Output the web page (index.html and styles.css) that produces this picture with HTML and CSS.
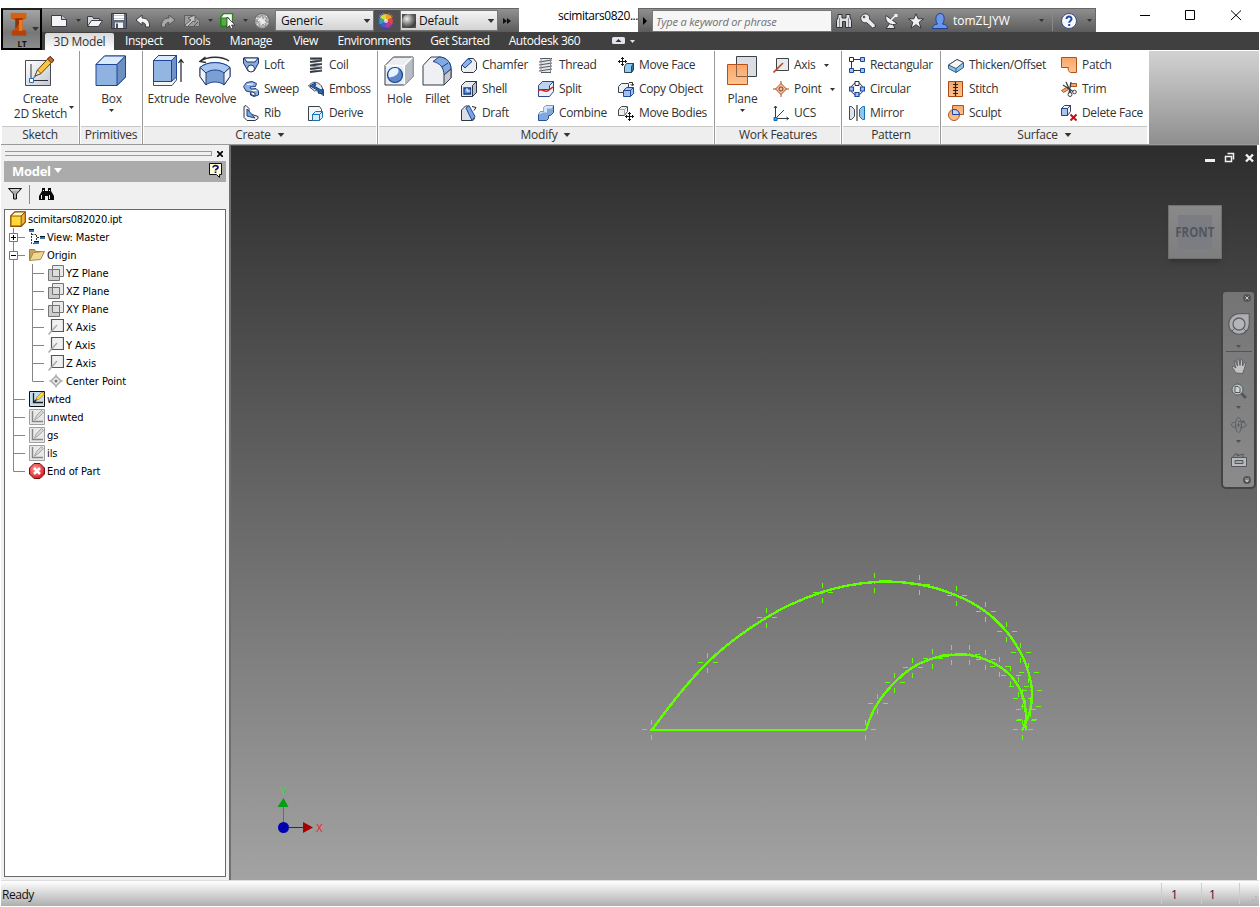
FILE: index.html
```html
<!DOCTYPE html>
<html lang="en">
<head>
<meta charset="utf-8">
<title>scimitars082020.ipt</title>
<link rel="stylesheet" href="styles.css">
</head>
<body>
<svg class="sprite" width="0" height="0" aria-hidden="true">
  <defs>
    <linearGradient id="steel" x1="0" y1="0" x2="1" y2="1"><stop offset="0" stop-color="#ffffff"/><stop offset="1" stop-color="#c3c8d0"/></linearGradient>
    <linearGradient id="orange" x1="0" y1="0" x2="0" y2="1"><stop offset="0" stop-color="#f9a668"/><stop offset="1" stop-color="#fdc491"/></linearGradient>
    <radialGradient id="ball" cx=".35" cy=".35" r=".7"><stop offset="0" stop-color="#f0f0f0"/><stop offset=".5" stop-color="#8a8a86"/><stop offset="1" stop-color="#33322f"/></radialGradient>
    <radialGradient id="redball" cx=".4" cy=".35" r=".7"><stop offset="0" stop-color="#ff9a9a"/><stop offset="1" stop-color="#d81418"/></radialGradient>
  </defs>
  <symbol id="caret" viewBox="0 0 5 3"><path d="M0 0h5L2.500 3z" fill="currentColor"/></symbol>
  <symbol id="new" viewBox="0 0 16 16"><path d="M.5 2.500h10l5 4v7H.5z" fill="#f4f4f6" stroke="#3a3d46"/><path d="M10.500 2.500v4h5" fill="#c5c8d0" stroke="#3a3d46"/></symbol>
  <symbol id="open" viewBox="0 0 16 16"><path d="M.5 13.500v-10h5l1 2h6v3" fill="#d5d8dd" stroke="#3a3d46"/><path d="M.5 13.500l4-6h11l-4 6z" fill="#f3f3f5" stroke="#3a3d46"/></symbol>
  <symbol id="save" viewBox="0 0 16 16"><path d="M.5.500h15v15h-15z" fill="#626977" stroke="#343943"/><path d="M3 1h10v6H3z" fill="#fff"/><path d="M3 2.500h10M3 5.500h10" stroke="#c0c7d1"/><path d="M4 9.500h8V15H4z" fill="#f0f1f3"/><path d="M5 10.500h2V15H5z" fill="#4a5160"/></symbol>
  <symbol id="undo" viewBox="0 0 16 16"><path d="M1 7l6-5v3c5 0 8 3 7.500 9h-4c.5-3-1-4.500-3.500-4.500V12z" fill="#f4f4f4" stroke="#3d404a"/></symbol>
  <symbol id="redo" viewBox="0 0 16 16"><path d="M15 7L9 2v3c-5 0-8 3-7.500 9h4c-.5-3 1-4.500 3.500-4.500V12z" fill="#a9a9a9" stroke="#565656"/></symbol>
  <symbol id="update" viewBox="0 0 16 16"><path d="M.5 2.500h9l6 5v6H.5z" fill="#9b9b9b" stroke="#606060"/><path d="M1 12l6-5-3-2 7-3v7L9 8l-6 6z" fill="#c2c2c2" stroke="#5f5f5f"/><path d="M9 14l5-5" stroke="#555"/></symbol>
  <symbol id="select" viewBox="0 0 16 16"><path d="M.5 4.500l3-4h9v9l-3 4h-9z" fill="#f3fff0" stroke="#2d8120" stroke-width="1.300"/><path d="M1 5h8v8H1z" fill="#57ad45" stroke="#277a1a"/><path d="M7 4v11l2.500-2.500L11 16l2-1-1.500-3H15z" fill="#fff" stroke="#333" stroke-width=".8"/></symbol>
  <symbol id="sphere" viewBox="0 0 16 16"><circle cx="8" cy="8" r="7.500" fill="#b3b3b3" stroke="#6a6a6a"/><path d="M4 3l2 2 2-3 1 4 4-2-2 4 4 1-4 1 1 4-3-3-3 4V9L1 8l3-1z" fill="#e9e9e9" stroke="#777" stroke-width=".6"/><path d="M2 5l12 6M3 12L13 3" stroke="#eee" stroke-dasharray="2 1"/></symbol>
  <symbol id="wheel" viewBox="0 0 16 16"><path d="M8 8V0a8 8 0 0 1 7 4z" fill="#f0a02c"/><path d="M8 8l7-4a8 8 0 0 1 0 8z" fill="#e24a33"/><path d="M8 8l7 4a8 8 0 0 1-7 4z" fill="#b53b9b"/><path d="M8 8v8a8 8 0 0 1-7-4z" fill="#4757d2"/><path d="M8 8l-7 4a8 8 0 0 1 0-8z" fill="#35a4a0"/><path d="M8 8L1 4a8 8 0 0 1 7-4z" fill="#d8dd34"/><circle cx="8" cy="8" r="2" fill="#fff" opacity=".7"/><circle cx="8" cy="8" r="7.500" fill="none" stroke="#37428a"/></symbol>
  <symbol id="material" viewBox="0 0 14 14"><path d="M0 0h14v14H0z" fill="#55524e"/><circle cx="7" cy="7" r="7" fill="url(#ball)"/></symbol>
  <symbol id="binoc" viewBox="0 0 16 16"><path d="M2 1.500h4V5h4V1.500h4v3l1.500 3v7H9.500v-6h-3v6H.5v-7l1.500-3z" fill="#dedfe3" stroke="#2f3237"/><path d="M3.500 5v9M12.500 5v9" stroke="#858a92"/></symbol>
  <symbol id="key" viewBox="0 0 16 16"><path d="M6.500 9.500l6 5.500 3-1-.5-2.500L9.500 6C10 2 7 .500 4.500 1S0 4 1 6.500s3 4 5.500 3z" fill="#ececee" stroke="#33363c"/><circle cx="4" cy="4" r="1.300" fill="#555"/></symbol>
  <symbol id="dish" viewBox="0 0 16 16"><path d="M6 10l-4 5.500h9L9 11" fill="#e6e6e8" stroke="#35383e"/><path d="M2 2.500c-2 6 5 11.500 11 8z" fill="#f2f2f3" stroke="#35383e"/><path d="M7 7l5-5" stroke="#f5f5f5" fill="none" stroke-width="1.500"/><path d="M10.500 1h3v3h-3z" fill="#f2f2f3"/></symbol>
  <symbol id="star" viewBox="0 0 16 16"><path d="M8 .800l2.200 5h5.300l-4.300 3.400 1.800 6L8 11.700 3 15.200l1.800-6L.5 5.800h5.300z" fill="#f0f0f2" stroke="#34373c"/></symbol>
  <symbol id="user" viewBox="0 0 16 16"><path d="M.5 15.500c0-3 2-4 5-4.500C3 8 3 1 8 .500S13 8 10.500 11c3 .500 5 1.500 5 4.500z" fill="#6a97ec" stroke="#1d3f99"/></symbol>
  <symbol id="help" viewBox="0 0 16 16"><circle cx="8" cy="8" r="7.500" fill="#f7f8fb" stroke="#35507c"/><path d="M5.500 6c0-3.500 5.300-3 5 0 0 1.700-2.300 1.800-2.300 3.800M8.200 11v2" fill="none" stroke="#1f4aa5" stroke-width="2"/></symbol>
  <symbol id="applogo" viewBox="0 0 20 30"><path d="M1 1h17v6l-4 2v10l4 2v5H2v-5l4-2V9L1 7z" fill="#c24a0a"/><path d="M1 1h17v6H1z" fill="#d8600f"/><path d="M6 7h8L6 19z" fill="#8f3407"/><path d="M10 9h4v11l-4 6z" fill="#e57a2b"/><path d="M2 21h16v5H2z" fill="#b44309"/></symbol>

  <symbol id="sketch" viewBox="1 0 32 32"><path d="M2.500 5.500h25v25h-25z" fill="url(#steel)" stroke="#474b55"/><path d="M8 9v16.500h17M8.500 25l10-10" stroke="#30333a" fill="none"/><path d="M6.500 23.500h4v4h-4z" fill="#fff" stroke="#1c6fc0"/><path d="M12 21l2.500-6L27 1.500l4 3.500L18 18.500z" fill="#ffc63a" stroke="#58400f"/><path d="M24.500 4L27 1.500l4 3.500-2.500 3z" fill="#c76b37" stroke="#5d2b12"/><path d="M12 21l2.500-6 3.500 3.500z" fill="#f7e3bf" stroke="#493a23" stroke-width=".7"/></symbol>
  <symbol id="box" viewBox="0 0 32 32"><path d="M1 9.500L9.500 1h21v21L22 30.500H1z" fill="#8fb2e0" stroke="#1e4593"/><path d="M1 9.500L9.500 1h21L22 9.500z" fill="#dbeafa" stroke="#1e4593"/><path d="M22 9.500L30.500 1v21L22 30.500z" fill="#6d8fc2" stroke="#1e4593"/></symbol>
  <symbol id="extrude" viewBox="0 0 32 32"><path d="M1.500 25V5.500l5-5h18V25l-4.500 5.500H1.500z" fill="#f4f5f6" stroke="#475161"/><path d="M1.500 5.500l5-5h18l-5 5v21h-18z" fill="#92b5e2" stroke="#1d469b"/><path d="M1.500 5.500l5-5h18l-5 5z" fill="#dceafa" stroke="#1d469b"/><path d="M19.500 5.500l5-5V22l-5 4.500z" fill="#7192c5" stroke="#1d469b"/><path d="M29 27V5M26.500 8L29 4.500 31.500 8" fill="none" stroke="#202329" stroke-width="1.200"/></symbol>
  <symbol id="revolve" viewBox="0 0 32 32"><path d="M1 12.500C8 6 24 6 31 12.500v9L25 30c-4-4-14-4-18 0l-6-8.500z" fill="#7a9fd2" stroke="#1c4497"/><path d="M1 12.500C8 6 24 6 31 12.500L25 18c-4-4-14-4-18 0z" fill="#a9c7ee" stroke="#1c4497"/><path d="M1 12.500L7 18v12l-6-8.500zM31 12.500L25 18v12l6-8.500z" fill="#f1f4f8" stroke="#263d6a"/><path d="M1 6.500C9 1 23 1 30 6M6.500 2L1 6.500l6 1" fill="none" stroke="#2a2d33" stroke-width="1.500"/></symbol>
  <symbol id="hole" viewBox="-1 -1 32 32"><path d="M1 9.500L9.500 1H29v19.500L20.500 29H1z" fill="#ebedf0" stroke="#343b49"/><path d="M1.500 9.500h19V28.500M20.500 9.500L28.500 1.500" fill="none" stroke="#fff" stroke-width="1.500"/><path d="M21 9.700L28.500 2v18.500L21 28z" fill="#b9bec6"/><circle cx="11" cy="19" r="7.500" fill="#5c87c9" stroke="#16418f" stroke-width="1.200"/><path d="M4.500 17a7 7 0 0 1 9.500-4.500c2 5-2 8-9 9a7 7 0 0 1-.5-4.500z" fill="#e9f3fd"/></symbol>
  <symbol id="fillet" viewBox="-1 -1 32 32"><path d="M1 9.500L9 1h8c7 0 12 5 12 12v9l-7 7H1z" fill="#eff0f3" stroke="#343b49"/><path d="M11 5.500L17 1c7 0 12 5 12 12l-7 6C22 12 18 7 11 5.500z" fill="#82aae1" stroke="#184291"/><path d="M22 19l7-6v9l-7 7z" fill="#c5c9d0" stroke="#343b49"/><path d="M20 11l6-4" stroke="#184291"/></symbol>
  <symbol id="plane" viewBox="0 0 32 32"><path d="M10.500 1.500h20v20h-20z" fill="#dadde2" stroke="#3a3f48"/><path d="M1.500 9.500h20v20h-20z" fill="url(#orange)" stroke="#bb4f14"/><path d="M10.500 9.500v12h11" fill="none" stroke="#8a6048"/></symbol>

  <symbol id="loft" viewBox="0 0 16 16"><path d="M.5 1v5L5 14h6l4.500-8V1z" fill="#85abdf" stroke="#213864"/><path d="M1 1h14l-3 4H4z" fill="#eef5fc" stroke="#213864"/><circle cx="8" cy="11.500" r="3.500" fill="#fff" stroke="#213864"/></symbol>
  <symbol id="sweep" viewBox="0 0 16 16"><path d="M.5 5.500l3-4L9 .500l4.500 2-1 3L7 6l1 2 5-.5 2.500 2.500v4L11 15.500 7.500 14v-3L3 10z" fill="#8db0e0" stroke="#1c4084"/><path d="M8 10.500l4 1.500v3l-4-1.500z" fill="#fff" stroke="#263c68"/><path d="M4 3.500l6-.5M8.500 9.500l5 0" stroke="#fff"/></symbol>
  <symbol id="rib" viewBox="0 0 16 16"><path d="M1 1.500l2-1 3 3v5l9 3v2l-3 2H4l-3-3z" fill="#f3f5f8" stroke="#2e3543"/><path d="M4 4v7l8 2z" fill="#7fa8e0" stroke="#1d4390"/></symbol>
  <symbol id="coil" viewBox="0 0 16 16"><path d="M2 1.500h12M2 5l12-1.500M2 8.500L14 7M2 12l12-1.500M2 15l12-1.500" fill="none" stroke="#33373f" stroke-width="1.800"/><path d="M2 2l12 1.500M2 5.500L14 7M2 9l12 1.500M2 12.500L14 14" stroke="#6b7078" stroke-width=".8"/></symbol>
  <symbol id="emboss" viewBox="0 0 16 16"><path d="M.5 5c4-5 9-5 13 0l2 5v5c-4-5-8-6-9-5z" fill="#e4e9f0" stroke="#3d485a"/><path d="M2 5l5-3 1 2-2 1 7 4 2-1v5l-5-1 1-2-7-4z" fill="#2b68b2" stroke="#153d7c"/></symbol>
  <symbol id="derive" viewBox="0 0 16 16"><path d="M.5 1.500h11l2 3v3h-7v8h-6z" fill="#f4f5f7" stroke="#3b4049"/><path d="M4.500 9.500l3-3h7v6l-3 3h-7z" fill="#d7edfb" stroke="#1772ae"/><path d="M4.500 9.500h7v6M11.500 9.500l3-3" fill="none" stroke="#1772ae"/></symbol>
  <symbol id="chamfer" viewBox="0 0 16 16"><path d="M.5 8.500l7-7h5l3 4v7l-3 3h-10l-2-2z" fill="#eceef1" stroke="#2e3543"/><path d="M1 8l6-6.500 4 3L4 11z" fill="#8db2e4" stroke="#194390"/></symbol>
  <symbol id="shell" viewBox="0 0 16 16"><path d="M.5 4.500l4-4h11v11l-4 4H.5z" fill="#e7eaef" stroke="#2e3543"/><path d="M11.500 4.500l4-4v11l-4 4z" fill="#b9c0ca" stroke="#2e3543"/><path d="M3 7h6.500v6H3z" fill="#6d98d8" stroke="#123c8c" stroke-width="1.300"/><path d="M6 7v3h3.500" stroke="#fff" fill="none"/></symbol>
  <symbol id="draft" viewBox="0 0 16 16"><path d="M.5 5l4-4h3l6 13-2 1.500H.5z" fill="#dce0e6" stroke="#2e3543"/><path d="M5 3l3-2.500 6 11-3 4z" fill="#7ca6e2" stroke="#1c4797"/><path d="M11 1.500l4 1-2 3" fill="none" stroke="#222"/></symbol>
  <symbol id="thread" viewBox="0 0 16 16"><path d="M3 1h10v14H3z" fill="#e5e7e9"/><path d="M2 1.500h12M1 5l13-2M1 8l13-2M1 11l13-2M1 14l13-2M3 15.500h10" stroke="#555960" stroke-width="1.100"/><path d="M3 1v14M12.500 1v14" stroke="#898d94"/></symbol>
  <symbol id="split" viewBox="0 0 16 16"><path d="M.5 4.500l4-4h11v10l-4 5H.5z" fill="#edf0f4" stroke="#2c4c88"/><path d="M.5 4.500l4-4h11l-4 4v4H.5z" fill="#bcd3f2" stroke="#2c4c88"/><path d="M0 10c4-4 7 3 11-1l4-3" fill="none" stroke="#d11c1c" stroke-width="1.500"/></symbol>
  <symbol id="combine" viewBox="0 0 16 16"><path d="M.5 9.500l2-3H6v-4l2-2h7.500v7l-3 3h-2v3l-2 2h-8z" fill="#82a7dc" stroke="#22509f"/><path d="M.5 9.500l2-3H6v-4l2-2h7.500l-2 3H9v4H5z" fill="#d5e4f7"/></symbol>
  <symbol id="moveface" viewBox="0 0 16 16"><path d="M4.500 0v9M0 4.500h9M3 1.500h3M3 7.500h3M1.500 3v3M7.500 3v3" stroke="#16181d" fill="none"/><path d="M6.500 9.500l2-3h7v6l-2 3h-7z" fill="#8ecdf0" stroke="#33404f"/><path d="M13.500 9.500l2-3v6l-2 3z" fill="#2a7bb9" stroke="#33404f"/></symbol>
  <symbol id="copyobj" viewBox="0 0 16 16"><path d="M.5 5.500l3-3h7v6l-2 3h-8z" fill="#edf0f4" stroke="#3c4452"/><path d="M5.500 9.500l3-3h7v6l-3 3h-7z" fill="#a1c1ec" stroke="#1d489c"/><path d="M5.500 9.500h7v6M12.500 9.500l3-3" fill="none" stroke="#1d489c"/><path d="M11 1.500h3.500V4M12.500 3l2 2 1.500-2" fill="none" stroke="#333"/></symbol>
  <symbol id="movebody" viewBox="0 0 16 16"><path d="M.5 4.500l3-3h6v5l-3 4h-6z" fill="#eceff2" stroke="#434952"/><path d="M6.500 4.500h-6M6.500 4.500v6M6.500 4.500l3-3" stroke="#a1a6ad"/><path d="M11.500 7v9M7 11.500h9M10 8.500h3M10 14.500h3M8.500 10v3M14.500 10v3" stroke="#101216"/></symbol>
  <symbol id="axis" viewBox="0 0 16 16"><path d="M3.500 1.500h12v12h-12z" fill="#e7eaed" stroke="#3e434c"/><path d="M.5 15.500L10 6" stroke="#b44e1d" stroke-width="1.600"/></symbol>
  <symbol id="point" viewBox="0 0 16 16"><path d="M8 0v16M0 8h16" stroke="#a55428"/><path d="M8 2.500L13.500 8 8 13.500 2.500 8z" fill="#f9c09a" stroke="#b04d1b"/><circle cx="8" cy="8" r="2" fill="#fff" stroke="#7a2f0c"/><path d="M7.500 7.500h1v1h-1z" fill="#522"/></symbol>
  <symbol id="ucs" viewBox="0 0 16 16"><path d="M2.500 1v12.500H16M3 13l8-8M1 3l1.500-2L4 3M13.500 12l2 1.500-2 1.500" fill="none" stroke="#373b43"/><path d="M1 12.500h3v3H1z" fill="#35a6ef" stroke="#0e64ad"/></symbol>
  <symbol id="rect" viewBox="0 0 16 16"><path d="M4 2.500h8M4 13.500h8M2.500 4v8" stroke="#30353d"/><path d="M.5.500h4v4h-4z" fill="#fff" stroke="#222b3a"/><path d="M11.500.500h4v4h-4zM.5 11.500h4v4h-4zM11.500 11.500h4v4h-4z" fill="#a5c3ef" stroke="#1b479c"/></symbol>
  <symbol id="circ" viewBox="0 0 16 16"><circle cx="8" cy="8" r="6" fill="none" stroke="#30353d"/><path d="M6 .500h4v4H6z" fill="#fff" stroke="#222b3a"/><path d="M.5 6h4v4h-4zM11.500 6h4v4h-4zM6 11.500h4v4H6z" fill="#a5c3ef" stroke="#1b479c" stroke-width="1.200"/></symbol>
  <symbol id="mirror" viewBox="0 0 16 16"><path d="M.5 1.500h2l3 3v7l-3 3h-2z" fill="#dfe2e6" stroke="#464b54"/><path d="M15.500 1.500h-2l-3 3v7l3 3h2z" fill="#8ac6ee" stroke="#1574ae"/><path d="M8 0v16" stroke="#111"/></symbol>
  <symbol id="thicken" viewBox="0 0 16 16"><path d="M.5 8L9 2.500l6.500 3v5L8 15.500l-7.500-4z" fill="#89c3e9" stroke="#215e91"/><path d="M.5 8L9 2.500l6.500 3L8 11.500z" fill="#f4f6f7" stroke="#49515c"/><path d="M8 11.500v4" stroke="#215e91"/></symbol>
  <symbol id="stitch" viewBox="0 0 16 16"><path d="M.5.500h14v15H.5z" fill="url(#orange)" stroke="#a94915"/><path d="M7.500 1v14M5 3.500h5M5 6.500h5M5 9.500h5M5 12.500h5" stroke="#2e2119" stroke-width="1.200"/></symbol>
  <symbol id="sculpt" viewBox="0 0 16 16"><path d="M4.500.500h11v9h-11z" fill="url(#orange)" stroke="#b0561f"/><circle cx="6" cy="10" r="5.500" fill="url(#orange)" stroke="#b0561f"/><path d="M4.500 4.600A5.500 5.500 0 0 1 11.500 9.500h-7z" fill="#bcd5f4" stroke="#1d479c"/></symbol>
  <symbol id="patch" viewBox="0 0 16 16"><path d="M.5.500h15v15h-6c-2-1-3-3-2-5h-7z" fill="url(#orange)" stroke="#b0521c"/></symbol>
  <symbol id="trim" viewBox="0 0 16 16"><path d="M9.500 2.500h6v3h-6zM.5 9.500l5-3 2 2-5 3z" fill="#f8a46d" stroke="#b1541e"/><path d="M5 1l5 11M10 1L8 12M2 4l11 7" stroke="#3b3f46" stroke-width="1.300"/><circle cx="9" cy="13.500" r="2" fill="#fff" stroke="#3b3f46"/><circle cx="13.500" cy="11" r="1.800" fill="#fff" stroke="#3b3f46"/></symbol>
  <symbol id="delface" viewBox="0 0 16 16"><path d="M.5 3.500l3-3h6v6l-3 4h-6z" fill="#f3f5f7" stroke="#35445c"/><path d="M.5 3.500h6v7h-6z" fill="#a9c5ec" stroke="#1d468f"/><path d="M6.500 3.500l3-3" stroke="#35445c"/><path d="M9.500 9.500l6 6M15.500 9.500l-6 6" stroke="#c21016" stroke-width="2"/></symbol>

  <symbol id="part" viewBox="0 0 16 16"><path d="M.8 5l4-4h10.400v10l-4 4.200H.8z" fill="#ffd939" stroke="#925109" stroke-width="1.400"/><path d="M.8 5l4-4h10.400l-4 4z" fill="#fffac5" stroke="#925109"/><path d="M11.200 5l4-4v10l-4 4.200z" fill="#e9b53d" stroke="#925109"/></symbol>
  <symbol id="views" viewBox="0 0 16 16"><path d="M0 0h5v3H0zM5 12h5v3H5zM11 7h5v3h-5z" fill="#3475b5"/><path d="M0 .500h5M5 12.500h5M11 7.500h5" stroke="#111"/><path d="M2.500 4v10.500H5M2.500 5.500H7M7.500 6v5M8 8.500h3" fill="none" stroke="#333" stroke-dasharray="2 1"/></symbol>
  <symbol id="folder" viewBox="0 0 16 16"><path d="M.5 13.500v-11h5l1 2h6v3" fill="#c8a55b" stroke="#a27f39"/><path d="M.5 13.500l4-8 11-1-4 8z" fill="#f1d795" stroke="#a98946"/></symbol>
  <symbol id="tplane" viewBox="0 0 16 16"><path d="M4.500.500h11v11h-11z" fill="#e9e9e9" stroke="#747474"/><path d="M.5 4.500h11v11H.5z" fill="#cbcccb" stroke="#747474"/><path d="M4.500 4.500h7v7h-7z" fill="#dcdddc" stroke="#747474"/></symbol>
  <symbol id="taxis" viewBox="0 0 16 16"><path d="M3.500.500h12v12h-12z" fill="#f0f0f0" stroke="#555" stroke-width="1.200"/><path d="M.5 15.500L9 6" stroke="#aaa" stroke-width="1.500"/></symbol>
  <symbol id="tpoint" viewBox="0 0 16 16"><path d="M8 1v14M1 8h14" stroke="#aaa"/><path d="M8 3l5 5-5 5-5-5z" fill="#eee" stroke="#aaa" stroke-width="1.500"/><circle cx="8" cy="8" r="1.500" fill="#777"/></symbol>
  <symbol id="sk" viewBox="0 0 16 16"><path d="M.5.500h15v15H.5z" fill="#e8e8e8" stroke="#a0a0a0"/><path d="M3.500 2v10.500H14" fill="none" stroke="#858585" stroke-width="1.400"/><path d="M5.500 11l2-4.500 5-5 2 2-5 5z" fill="#d4d4d4" stroke="#999" stroke-width=".8"/></symbol>
  <symbol id="skactive" viewBox="0 0 16 16"><path d="M.5.500h15v15H.5z" fill="#c6ddf0" stroke="#101010"/><path d="M4.500 2v9.500H14M5 11l5-5" fill="none" stroke="#222" stroke-width="1.300"/><path d="M7 9l1-3 5-5 2.500 2-5 5z" fill="#ffd83c" stroke="#9b7410" stroke-width=".7"/></symbol>
  <symbol id="eop" viewBox="0 0 16 16"><path d="M5 .500h6L15.500 5v6L11 15.500H5L.5 11V5z" fill="url(#redball)" stroke="#701014"/><path d="M5 5l6 6M11 5l-6 6" stroke="#fff" stroke-width="2.500"/></symbol>
  <symbol id="filter" viewBox="0 0 14 12"><path d="M.5.500h13L8.500 6v5h-3V6z" fill="#aaa" stroke="#111"/><path d="M3 2h8" stroke="#eee"/></symbol>
  <symbol id="find" viewBox="0 0 15 13"><path d="M3 0h3v3h3V0h3v3l3 5v4H9V8H6v4H0V8l3-5z" fill="#080808"/><path d="M2.500 7v4M10.500 7v4M4.500 2v1M10.500 2v1" stroke="#eee"/></symbol>
  <symbol id="helpnote" viewBox="0 0 13 15"><path d="M.5.500h12v11h-2v3l-3-3h-7z" fill="#ffffd8" stroke="#111"/><path d="M4 4.500c0-2.500 5-2.500 5 0 0 1.500-2.500 1.500-2.500 3M6.500 8.500v1.500" fill="none" stroke="#10107a" stroke-width="1.700"/></symbol>
  <symbol id="cross" viewBox="-10 -10 20 20" overflow="visible"><path d="M-10 0h5M-1.500 0h3M5 0h5M0-10v5M0-1.500v3M0 5v5" stroke="#62ff00" fill="none"/></symbol>
  <symbol id="g1" viewBox="0 0 28 18"><path d="M8.500 0v18M8.500 9.500H20" stroke="#868686" fill="none"/></symbol>
  <symbol id="g1end" viewBox="0 0 28 18"><path d="M8.500 0v9.500H20" stroke="#868686" fill="none"/></symbol>
  <symbol id="g2" viewBox="0 0 43 18"><path d="M8.500 0v18M27.500 0v18M27.500 9.500H39" stroke="#868686" fill="none"/></symbol>
  <symbol id="g2end" viewBox="0 0 43 18"><path d="M8.500 0v18M27.500 0v9.500H39" stroke="#868686" fill="none"/></symbol>
</svg>

<div class="app">
  <header class="top">
    <button class="appbtn"><svg class="logo"><use href="#applogo"/></svg><span>LT</span><svg class="caret lg"><use href="#caret"/></svg></button>
    <div class="title">
      <div class="qat">
        <svg class="i16"><use href="#new"/></svg><svg class="caret"><use href="#caret"/></svg>
        <svg class="i16"><use href="#open"/></svg><svg class="i16"><use href="#save"/></svg>
        <svg class="i16"><use href="#undo"/></svg><svg class="i16"><use href="#redo"/></svg>
        <svg class="i16"><use href="#update"/></svg><svg class="caret"><use href="#caret"/></svg>
        <svg class="i16"><use href="#select"/></svg><svg class="caret"><use href="#caret"/></svg>
        <svg class="i16"><use href="#sphere"/></svg>
        <div class="combo"><span>Generic</span><svg class="caret lg"><use href="#caret"/></svg></div>
        <div class="wheelbtn"><svg class="i16"><use href="#wheel"/></svg></div>
        <div class="combo mat"><svg class="i14"><use href="#material"/></svg><span>Default</span><svg class="caret lg"><use href="#caret"/></svg></div>
        <svg class="more" viewBox="0 0 8 6"><path d="M0 0l4 3-4 3zM4 0l4 3-4 3z" fill="#111"/></svg>
      </div>
      <div class="doc">scimitars0820...</div>
      <div class="info">
        <svg class="tri" viewBox="0 0 4 8"><path d="M0 0l4 4-4 4z"/></svg>
        <div class="search">Type a keyword or phrase</div>
        <svg class="i16"><use href="#binoc"/></svg><svg class="i16"><use href="#key"/></svg>
        <svg class="i16"><use href="#dish"/></svg><svg class="i16"><use href="#star"/></svg>
        <svg class="i16"><use href="#user"/></svg><span class="uname">tomZLJYW</span>
        <svg class="caret"><use href="#caret"/></svg><i class="vsep"></i>
        <svg class="i16"><use href="#help"/></svg><svg class="caret"><use href="#caret"/></svg>
      </div>
      <svg class="winctl" width="163" height="24" viewBox="0 0 163 24"><path d="M44 7.500h10M89.500 2.500h9v9h-9zM135 2.500l10 9.500M145 2.500L135 12" fill="none" stroke="#000"/></svg>
    </div>
    <nav class="tabs">
      <a class="on">3D Model</a><a>Inspect</a><a>Tools</a><a>Manage</a><a>View</a><a>Environments</a><a>Get Started</a><a>Autodesk 360</a>
      <svg class="min" viewBox="0 0 24 8"><rect width="13" height="7" rx="1.500" fill="#e3e3ea"/><path d="M3.500 5L6.500 2l3 3z" fill="#333"/><path d="M18 3h5l-2.500 3z" fill="#e3e3ea"/></svg>
    </nav>
  </header>

  <section class="ribbon">
    <div class="panel sketch">
      <div class="body"><div class="big"><svg class="i32"><use href="#sketch"/></svg><span>Create</span><span>2D Sketch</span><svg class="caret corner"><use href="#caret"/></svg></div></div>
      <div class="foot">Sketch</div>
    </div>
    <div class="panel prim">
      <div class="body"><div class="big"><svg class="i32"><use href="#box"/></svg><span>Box</span><svg class="caret"><use href="#caret"/></svg></div></div>
      <div class="foot">Primitives</div>
    </div>
    <div class="panel create">
      <div class="body">
        <div class="big"><svg class="i32"><use href="#extrude"/></svg><span>Extrude</span></div>
        <div class="big"><svg class="i32"><use href="#revolve"/></svg><span>Revolve</span></div>
        <i></i>
        <ul><li><svg class="i16"><use href="#loft"/></svg><span>Loft</span></li><li><svg class="i16"><use href="#sweep"/></svg><span>Sweep</span></li><li><svg class="i16"><use href="#rib"/></svg><span>Rib</span></li></ul>
        <ul><li><svg class="i16"><use href="#coil"/></svg><span>Coil</span></li><li><svg class="i16"><use href="#emboss"/></svg><span>Emboss</span></li><li><svg class="i16"><use href="#derive"/></svg><span>Derive</span></li></ul>
      </div>
      <div class="foot">Create<svg class="caret lg"><use href="#caret"/></svg></div>
    </div>
    <div class="panel modify">
      <div class="body">
        <div class="big"><svg class="i32"><use href="#hole"/></svg><span>Hole</span></div>
        <div class="big"><svg class="i32"><use href="#fillet"/></svg><span>Fillet</span></div>
        <i></i>
        <ul><li><svg class="i16"><use href="#chamfer"/></svg><span>Chamfer</span></li><li><svg class="i16"><use href="#shell"/></svg><span>Shell</span></li><li><svg class="i16"><use href="#draft"/></svg><span>Draft</span></li></ul>
        <ul><li><svg class="i16"><use href="#thread"/></svg><span>Thread</span></li><li><svg class="i16"><use href="#split"/></svg><span>Split</span></li><li><svg class="i16"><use href="#combine"/></svg><span>Combine</span></li></ul>
        <ul><li><svg class="i16"><use href="#moveface"/></svg><span>Move Face</span></li><li><svg class="i16"><use href="#copyobj"/></svg><span>Copy Object</span></li><li><svg class="i16"><use href="#movebody"/></svg><span>Move Bodies</span></li></ul>
      </div>
      <div class="foot">Modify<svg class="caret lg"><use href="#caret"/></svg></div>
    </div>
    <div class="panel work">
      <div class="body">
        <div class="big"><svg class="i32"><use href="#plane"/></svg><span>Plane</span><svg class="caret"><use href="#caret"/></svg></div>
        <i></i>
        <ul><li><svg class="i16"><use href="#axis"/></svg><span>Axis</span><svg class="caret"><use href="#caret"/></svg></li><li><svg class="i16"><use href="#point"/></svg><span>Point</span><svg class="caret"><use href="#caret"/></svg></li><li><svg class="i16"><use href="#ucs"/></svg><span>UCS</span></li></ul>
      </div>
      <div class="foot">Work Features</div>
    </div>
    <div class="panel pattern">
      <div class="body"><i></i>
        <ul><li><svg class="i16"><use href="#rect"/></svg><span>Rectangular</span></li><li><svg class="i16"><use href="#circ"/></svg><span>Circular</span></li><li><svg class="i16"><use href="#mirror"/></svg><span>Mirror</span></li></ul>
      </div>
      <div class="foot">Pattern</div>
    </div>
    <div class="panel surface">
      <div class="body"><i></i>
        <ul><li><svg class="i16"><use href="#thicken"/></svg><span>Thicken/Offset</span></li><li><svg class="i16"><use href="#stitch"/></svg><span>Stitch</span></li><li><svg class="i16"><use href="#sculpt"/></svg><span>Sculpt</span></li></ul>
        <ul><li><svg class="i16"><use href="#patch"/></svg><span>Patch</span></li><li><svg class="i16"><use href="#trim"/></svg><span>Trim</span></li><li><svg class="i16"><use href="#delface"/></svg><span>Delete Face</span></li></ul>
      </div>
      <div class="foot">Surface<svg class="caret lg"><use href="#caret"/></svg></div>
    </div>
  </section>

  <main class="work-area">
    <aside class="browser">
      <div class="grip"><i></i><svg viewBox="0 0 6 6"><path d="M0 0l6 6M6 0L0 6" stroke="#000" stroke-width="1.700"/></svg></div>
      <div class="bhead"><b>Model</b><svg class="caret"><use href="#caret"/></svg><svg class="note"><use href="#helpnote"/></svg></div>
      <div class="btools"><svg class="filter"><use href="#filter"/></svg><i></i><svg class="find"><use href="#find"/></svg></div>
      <div class="tree">
        <div class="row root"><svg class="i16"><use href="#part"/></svg><span>scimitars082020.ipt</span></div>
        <div class="row"><svg class="gut" viewBox="0 0 24 18"><path d="M8.500 0v18M8.500 9.500H20" stroke="#868686"/><path d="M4.500 5.500h8v8h-8z" fill="#fff" stroke="#777"/><path d="M6 9.500h5M8.500 7v5" stroke="#000"/></svg><svg class="i16"><use href="#views"/></svg><span>View: Master</span></div>
        <div class="row"><svg class="gut" viewBox="0 0 24 18"><path d="M8.500 0v18M8.500 9.500H20" stroke="#868686"/><path d="M4.500 5.500h8v8h-8z" fill="#fff" stroke="#777"/><path d="M6 9.500h5" stroke="#000"/></svg><svg class="i16"><use href="#folder"/></svg><span>Origin</span></div>
        <div class="row"><svg class="gut deep"><use href="#g2"/></svg><svg class="i16"><use href="#tplane"/></svg><span>YZ Plane</span></div>
        <div class="row"><svg class="gut deep"><use href="#g2"/></svg><svg class="i16"><use href="#tplane"/></svg><span>XZ Plane</span></div>
        <div class="row"><svg class="gut deep"><use href="#g2"/></svg><svg class="i16"><use href="#tplane"/></svg><span>XY Plane</span></div>
        <div class="row"><svg class="gut deep"><use href="#g2"/></svg><svg class="i16"><use href="#taxis"/></svg><span>X Axis</span></div>
        <div class="row"><svg class="gut deep"><use href="#g2"/></svg><svg class="i16"><use href="#taxis"/></svg><span>Y Axis</span></div>
        <div class="row"><svg class="gut deep"><use href="#g2"/></svg><svg class="i16"><use href="#taxis"/></svg><span>Z Axis</span></div>
        <div class="row"><svg class="gut deep"><use href="#g2end"/></svg><svg class="i16"><use href="#tpoint"/></svg><span>Center Point</span></div>
        <div class="row"><svg class="gut"><use href="#g1" width="28" height="18"/></svg><svg class="i16"><use href="#skactive"/></svg><span>wted</span></div>
        <div class="row"><svg class="gut"><use href="#g1" width="28" height="18"/></svg><svg class="i16"><use href="#sk"/></svg><span>unwted</span></div>
        <div class="row"><svg class="gut"><use href="#g1" width="28" height="18"/></svg><svg class="i16"><use href="#sk"/></svg><span>gs</span></div>
        <div class="row"><svg class="gut"><use href="#g1" width="28" height="18"/></svg><svg class="i16"><use href="#sk"/></svg><span>ils</span></div>
        <div class="row"><svg class="gut"><use href="#g1end" width="28" height="18"/></svg><svg class="i16"><use href="#eop"/></svg><span>End of Part</span></div>
      </div>
    </aside>
    <section class="viewport">
      <svg class="canvas" viewBox="231 146 1026 734">
        <path d="M1205 160.500h10" stroke="#eee" stroke-width="3"/>
        <g class="marks" fill="none" stroke="#62ff00" stroke-width="2.400">
          <path d="M866 730H652C670 705 688.400 681.300 707.500 662.500S747.300 629.300 766.500 617.500S804.500 597.900 822.500 592S858.300 583.300 874.500 582S905.800 582.300 919.500 584.500S945.500 591 956.500 595.500S977.200 605.500 985.500 611.500S1000.700 624.700 1006.500 631.500S1016.800 645.700 1020.500 652.500S1026.600 666.200 1028.500 672.500S1031.600 684.800 1032 690.500S1031.800 701.700 1031 706.500S1028.400 715.700 1027 719.500S1024 726 1022.500 729.500"/>
          <path d="M866 730C868 723 872.700 711.400 877.500 703.500S888.700 688.500 894.500 682.500S906.200 671.500 912.500 667.500S926 660.600 932.500 658.500S945.300 655.600 951.500 655S963.800 654.200 969.500 655S980.500 657.600 985.500 659.500S995.300 663.800 999.500 666.500S1007.300 672.200 1010.500 675.500S1016.300 682.700 1018.500 686.500S1022.300 694.700 1023.500 698.500S1025.100 705.800 1025.500 709.500S1026.500 717.200 1026 720.500S1024 726 1022.500 729.500"/>
        </g>
        <g class="marks">
          <use href="#cross" x="641.500" y="719.500" width="20" height="20"/><use href="#cross" x="697.500" y="652.500" width="20" height="20"/><use href="#cross" x="756.500" y="607.500" width="20" height="20"/><use href="#cross" x="812.500" y="582.500" width="20" height="20"/><use href="#cross" x="864.500" y="572.500" width="20" height="20"/><use href="#cross" x="909.500" y="574.500" width="20" height="20"/><use href="#cross" x="946.500" y="585.500" width="20" height="20"/><use href="#cross" x="975.500" y="601.500" width="20" height="20"/><use href="#cross" x="996.500" y="621.500" width="20" height="20"/><use href="#cross" x="1010.500" y="642.500" width="20" height="20"/><use href="#cross" x="1018.500" y="662.500" width="20" height="20"/><use href="#cross" x="1021.500" y="680.500" width="20" height="20"/><use href="#cross" x="1020.500" y="696.500" width="20" height="20"/><use href="#cross" x="1016.500" y="709.500" width="20" height="20"/><use href="#cross" x="1012.500" y="719.500" width="20" height="20"/>
          <use href="#cross" x="855.500" y="719.500" width="20" height="20"/><use href="#cross" x="867.500" y="693.500" width="20" height="20"/><use href="#cross" x="884.500" y="672.500" width="20" height="20"/><use href="#cross" x="902.500" y="657.500" width="20" height="20"/><use href="#cross" x="922.500" y="648.500" width="20" height="20"/><use href="#cross" x="941.500" y="644.500" width="20" height="20"/><use href="#cross" x="959.500" y="644.500" width="20" height="20"/><use href="#cross" x="975.500" y="649.500" width="20" height="20"/><use href="#cross" x="989.500" y="656.500" width="20" height="20"/><use href="#cross" x="1000.500" y="665.500" width="20" height="20"/><use href="#cross" x="1008.500" y="676.500" width="20" height="20"/><use href="#cross" x="1012.500" y="688.500" width="20" height="20"/><use href="#cross" x="1015.500" y="699.500" width="20" height="20"/><use href="#cross" x="1015.500" y="710.500" width="20" height="20"/>
        </g>
        <path d="M283.500 822V806" stroke="#00b010"/><path d="M283.500 798l5 9h-11z" fill="#00a010"/>
        <path d="M289 827.500h14" stroke="#a00000"/><path d="M303 822l10 5.500-10 5.500z" fill="#a80000"/>
        <circle cx="283.500" cy="827.500" r="5.500" fill="#0000b8"/><path d="M281 829l5-4" stroke="#000068"/>
        <text x="280.500" y="795" class="ax y">Y</text><text x="316" y="831.500" class="ax x">X</text>
        <g fill="none" stroke="#f2f2f2"><path d="M1225.500 156.500h6v5h-6zM1227.500 153.500h6v6" stroke-width="1.500"/><path d="M1246 154.500l7 7M1253 154.500l-7 7" stroke-width="2.400"/></g>
      </svg>
      <div class="cube"><i></i><span>FRONT</span></div>
      <div class="nav">
        <svg class="nx" viewBox="0 0 8 8"><circle cx="4" cy="4" r="4" fill="#555"/><path d="M2.500 2.500l3 3M5.500 2.500l-3 3" stroke="#ccc"/></svg>
        <svg class="nw" viewBox="0 0 22 22"><path d="M11 .700h10.300V11A10.300 10.300 0 1 1 11 .700z" fill="#aeafb3" stroke="#606166" stroke-width="1.300"/><circle cx="11" cy="11" r="6" fill="#b5b6ba" stroke="#606166" stroke-width="1.300"/><path d="M4 18l3-3M15 15l3 3" stroke="#606166"/></svg>
        <svg class="caret"><use href="#caret"/></svg><hr>
        <svg class="i16" viewBox="0 0 16 16"><path d="M5 15l-4-6 1-1 3 2L3 3l1-.5L6.500 8 6 1l1.500-.5L9 7.500 10 1l1.500.5V8L14 4l1 .5-2 7-1.500 4z" fill="#c2c2c4" stroke="#55575b" stroke-width=".8"/></svg>
        <svg class="i16" viewBox="0 0 16 16"><path d="M10 10l5 5" stroke="#55575b" stroke-width="3"/><circle cx="6.500" cy="6.500" r="5.500" fill="#b5c4c2" stroke="#55575b"/><path d="M4 3.500h3l2 2v4H4z" fill="#d2d2d2" stroke="#55575b"/></svg>
        <svg class="caret"><use href="#caret"/></svg>
        <svg class="i16" viewBox="0 0 16 16"><ellipse cx="7.500" cy="8" rx="3" ry="7.500" fill="none" stroke="#5d6064"/><path d="M4 5C-1 6-1 10 5 10.500M7 4.500c9 0 11 5 4 6l-2 .5" fill="none" stroke="#5d6064"/><path d="M7.500 6v4M5.500 8h4M12 3v3M11 4.500h3" stroke="#5d6064"/></svg>
        <svg class="caret"><use href="#caret"/></svg>
        <svg class="i16" viewBox="0 0 16 16"><path d="M.5 5.500h15v9H.5z" fill="#b9babd" stroke="#54565a"/><path d="M4 8.500h8v3H4z" fill="#9aa" stroke="#54565a"/><path d="M2 5l2-3h3l-1 2 6-2v3" fill="none" stroke="#54565a"/></svg>
        <svg class="nx" viewBox="0 0 8 8"><circle cx="4" cy="4" r="4" fill="#555"/><path d="M2 3h4M2.500 4.500h3L4 6z" stroke="#ccc" stroke-width=".8" fill="#ccc"/></svg>
      </div>
    </section>
  </main>
  <footer class="status"><span>Ready</span><b>1</b><b>1</b><div class="size"><svg viewBox="0 0 8 8"><path d="M6 0h2v2H6zM3 3h2v2H3zM6 3h2v2H6zM0 6h2v2H0zM3 6h2v2H3zM6 6h2v2H6z" fill="#b8b8b8"/></svg></div></footer>
</div>
</body>
</html>
```
FILE: styles.css
```css
* { box-sizing: border-box; }
body { margin: 0; background: #fff; font: 12px/14px "Open Sans", "Noto Sans", sans-serif; color: #333; overflow: hidden; }
svg { display: block; flex: none; }
.sprite { position: absolute; }
.app { width: 1260px; height: 907px; padding: 8px 1px 0; display: flex; flex-direction: column; }
.i16 { width: 16px; height: 16px; }
.i14 { width: 14px; height: 14px; }
.i32 { width: 32px; height: 32px; }
.caret { width: 5px; height: 3px; color: #333; }
.caret.lg { width: 8px; height: 4px; }

.top { display: grid; grid-template: 24px 19px / 41px 1fr; flex: none; }
.appbtn { grid-row: 1 / 3; margin: 0; padding: 2px 0 0 7px; height: 42px; border: 2px solid #000; border-top-color: #222; background: linear-gradient(#a4a4a4, #777 60%, #8d8d8d); display: grid; grid-template: 27px 9px / 18px 11px; align-items: center; }
.logo { width: 18px; height: 29px; grid-area: 1 / 1; }
.appbtn span { grid-area: 2 / 1; font: bold 8px/8px "Open Sans"; text-align: center; color: #111; padding-left: 6px; }
.appbtn .caret { grid-area: 1 / 2; margin: 6px 0 0 4px; width: 7px; }
.title { display: flex; background: #fff; }
.qat { width: 477px; height: 24px; display: grid; align-items: center; border-top: 1px solid #666; background: linear-gradient(#919191, #5b5b5b);
  grid-template-columns: 25px 11px 24px 24px 25px 24px 24px 12px 23px 11px 21px 99px 26px 98px 1fr; padding-left: 9px; }
.combo { height: 21px; padding: 0 2px 0 5px; display: flex; align-items: center; background: linear-gradient(#f4f4f4, #d3d3d3); border: 1px solid #777; color: #111; letter-spacing: -.2px; }
.combo .caret { margin-left: auto; }
.combo.mat { padding-left: 1px; gap: 3px; }
.wheelbtn { height: 22px; padding: 3px 4px; background: #505050; }
.more { width: 8px; height: 6px; margin-left: 5px; }
.doc { width: 119px; color: #000; text-align: right; padding: 1px 0 0; letter-spacing: -.45px; }
.info { width: 458px; display: grid; align-items: center; border: 1px solid #666; border-bottom: 0; background: linear-gradient(#8e8e8e, #5c5c5c);
  grid-template-columns: 13px 184px 24px 24px 24px 24px 20px 87px 13px 9px 26px 1fr; color: #fff; }
.tri { width: 4px; height: 8px; margin-left: 4px; }
.search { height: 22px; width: 180px; background: #f6f6f6; border: 1px solid #777; color: #707070; font-style: italic; font-size: 11px; line-height: 21px; padding-left: 3px; letter-spacing: -.17px; white-space: nowrap; }
.vsep { width: 1px; height: 21px; background: #888; }
.uname { letter-spacing: 0; padding-left: 1px; }
.tabs { display: grid; background: #404040; color: #fff; height: 18px; line-height: 18px; white-space: nowrap; letter-spacing: -.38px;
  grid-template-columns: 69px 60px 45px 64px 45px 92px 80px 89px 1fr; padding-left: 3px; text-align: center; }
.tabs .on { background: linear-gradient(#d8d8d8, #fff); color: #333; border-radius: 2px 2px 0 0; margin-top: 1px; line-height: 17px; letter-spacing: -.25px; }
.min { width: 24px; height: 8px; margin: 5px 0 0 23px; }

.ribbon { height: 94px; flex: none; display: flex; background: linear-gradient(#d2d2d2, #8f8f8f); border-bottom: 1px solid #9a9a9a; }
.panel { display: flex; flex-direction: column; border-right: 1px solid #999; background: #fff; }
.sketch { width: 79px; } .prim { width: 63px; } .create { width: 235px; } .modify { width: 337px; } .work { width: 127px; } .pattern { width: 99px; } .surface { width: 208px; border-color: #fff; }
.body { height: 75px; display: grid; padding-top: 2px; align-items: start; }
.create .body { grid-template-columns: 50px 44px 6px 65px 1fr; }
.modify .body { grid-template-columns: 42px 34px 7px 77px 80px 1fr; }
.work .body { grid-template-columns: 54px 4px 1fr; }
.pattern .body { grid-template-columns: 7px 1fr; }
.surface .body { grid-template-columns: 7px 113px 1fr; }
.big { display: grid; justify-items: center; padding: 2px 0 0 1px; white-space: nowrap; position: relative; letter-spacing: -.25px; }
.big .i32 { margin: 0 0 4px -1px; }
.big span { line-height: 15px; }
.big .caret { margin-top: 3px; }
.big .corner { position: absolute; right: 5px; top: 50px; }
.body ul { list-style: none; margin: 0; padding: 0; }
.body li { height: 24px; display: flex; align-items: center; white-space: nowrap; letter-spacing: -.34px; }
.body li span { margin-left: 5px; }
.body li .caret { margin-left: 9px; }
.foot { height: 18px; margin: 0 1px; background: #eee; border-top: 1px solid #c8c8c8; display: flex; justify-content: center; align-items: center; gap: 6px; padding-bottom: 2px; letter-spacing: -.25px; }

.work-area { height: 735px; flex: none; display: flex; padding-right: 2px; }
.browser { width: 230px; background: #f0f0f0; border-right: 2px solid #6f6f6f; padding: 0 3px 3px; display: flex; flex-direction: column; font: 11px/14px "DejaVu Sans Condensed", "Noto Sans", sans-serif; color: #000; }
.grip { height: 16px; display: flex; padding: 5px 0 0 1px; }
.grip i { width: 207px; height: 5px; border: 1px solid #999; border-left: 0; margin-top: 1px; }
.grip svg { width: 6px; height: 6px; margin: 1px 0 0 5px; }
.bhead { height: 21px; width: 222px; background: #ababab; color: #fff; display: flex; align-items: center; padding: 0 4px 2px 8px; gap: 3px; }
.bhead b { font: bold 13px "Open Sans"; letter-spacing: -.3px; }
.bhead .caret { width: 8px; height: 5px; color: #fff; }
.note { width: 13px; height: 15px; margin-left: auto; }
.btools { height: 27px; display: flex; align-items: center; padding: 0 0 3px 4px; }
.btools i { width: 1px; height: 19px; background: #888; margin: 0 9px 0 7px; }
.filter { width: 14px; height: 12px; }
.find { width: 15px; height: 13px; }
.tree { flex: 1; width: 222px; background: #fff; border: 1px solid #696969; }
.row { height: 18px; display: flex; align-items: center; white-space: nowrap; letter-spacing: -.08px; }
.row.root { padding-left: 5px; letter-spacing: -.25px; }
.row span { margin-left: 2px; padding-top: 2px; }
.gut { width: 24px; height: 18px; }
.gut.deep { width: 43px; }

.viewport { flex: 1; position: relative; background: linear-gradient(#2d2d2d, #a3a3a3); border-top: 1px solid #555; }
.canvas { width: 1026px; height: 734px; }
.marks { shape-rendering: crispEdges; }
.ax { font: 10px "DejaVu Sans"; }
.ax.y { fill: #25e425; } .ax.x { fill: #ef2525; }
.cube { position: absolute; right: 35px; top: 59px; width: 54px; height: 54px; border: 1px solid #707070; background: linear-gradient(#898989, #7e7e7e); box-shadow: 0 5px 4px -2px #333; display: grid; place-items: center; }
.cube i, .cube span { grid-area: 1 / 1; }
.cube i { width: 34px; height: 34px; background: #7b7d82; }
.cube span { font: bold 14px "Open Sans"; color: #53565d; transform: scaleX(.82); padding-bottom: 2px; }
.nav { position: absolute; right: 1px; top: 144px; width: 35px; height: 199px; border: 2px solid #444; border-radius: 5px; background: linear-gradient(#747474, #8b8b8b); display: grid; justify-items: center; align-items: center; align-content: start; grid-template-rows: 12px 39px 7px 3px 26px 24px 9px 25px 9px 27px 14px; }
.nx { width: 8px; height: 8px; justify-self: end; margin-right: 3px; }
.nw { width: 22px; height: 22px; }
.nav hr { width: 26px; height: 1px; margin: 0; border: 0; background: #555; }
.nav .caret { color: #505156; }
.status { height: 26px; flex: none; display: flex; align-items: center; background: linear-gradient(#fff, #aeaeae); color: #111; border-top: 1px solid #ddd; }
.status span { flex: 1; padding: 2px 0 0 1px; letter-spacing: -.45px; }
.status b { font-weight: normal; width: 40px; height: 21px; line-height: 23px; padding-left: 9px; border-left: 1px solid #ccc; color: #313; }
.status b + b { width: 38px; padding-left: 7px; }
.size { width: 20px; height: 21px; border-left: 1px solid #ccc; display: flex; align-items: end; justify-content: end; padding-right: 2px; }
.size svg { width: 8px; height: 8px; }
```
